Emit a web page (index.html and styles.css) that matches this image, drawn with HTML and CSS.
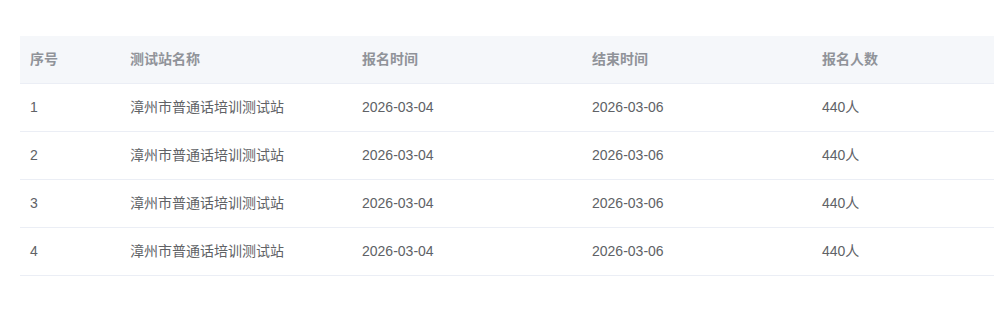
FILE: index.html
```html
<!DOCTYPE html>
<html lang="zh-CN">
<head>
<meta charset="utf-8">
<title>测试站列表</title>
<link rel="stylesheet" href="styles.css">
</head>
<body>
<div class="wrap">
  <table class="tbl">
    <colgroup>
      <col class="c1"><col class="c2"><col class="c3"><col class="c4"><col class="c5">
    </colgroup>
    <thead>
      <tr><th>序号</th><th>测试站名称</th><th>报名时间</th><th>结束时间</th><th>报名人数</th></tr>
    </thead>
    <tbody>
      <tr><td>1</td><td class="name">漳州市普通话培训测试站</td><td>2026-03-04</td><td>2026-03-06</td><td>440人</td></tr>
      <tr><td>2</td><td class="name">漳州市普通话培训测试站</td><td>2026-03-04</td><td>2026-03-06</td><td>440人</td></tr>
      <tr><td>3</td><td class="name">漳州市普通话培训测试站</td><td>2026-03-04</td><td>2026-03-06</td><td>440人</td></tr>
      <tr><td>4</td><td class="name">漳州市普通话培训测试站</td><td>2026-03-04</td><td>2026-03-06</td><td>440人</td></tr>
    </tbody>
  </table>
</div>
</body>
</html>
```
FILE: styles.css
```css
html, body {
  margin: 0;
  padding: 0;
  background: #ffffff;
  overflow: hidden;
}
body {
  font-family: "Liberation Sans", "Noto Sans CJK SC", sans-serif;
  font-size: 14px;
  color: #606266;
}
.wrap {
  padding: 36px 0 0 20px;
}
.tbl {
  border-collapse: collapse;
  table-layout: fixed;
  width: 1000px;
}
.c1 { width: 100px; }
.c2 { width: 232px; }
.c3 { width: 230px; }
.c4 { width: 230px; }
.tbl th, .tbl td {
  text-align: left;
  padding: 12px 10px;
  line-height: 23px;
  border-bottom: 1px solid #ebeef5;
  white-space: nowrap;
}
.tbl th {
  background: #f5f7fa;
  color: #909399;
  font-weight: bold;
}
.tbl td.name {
  letter-spacing: 0;
}
```
